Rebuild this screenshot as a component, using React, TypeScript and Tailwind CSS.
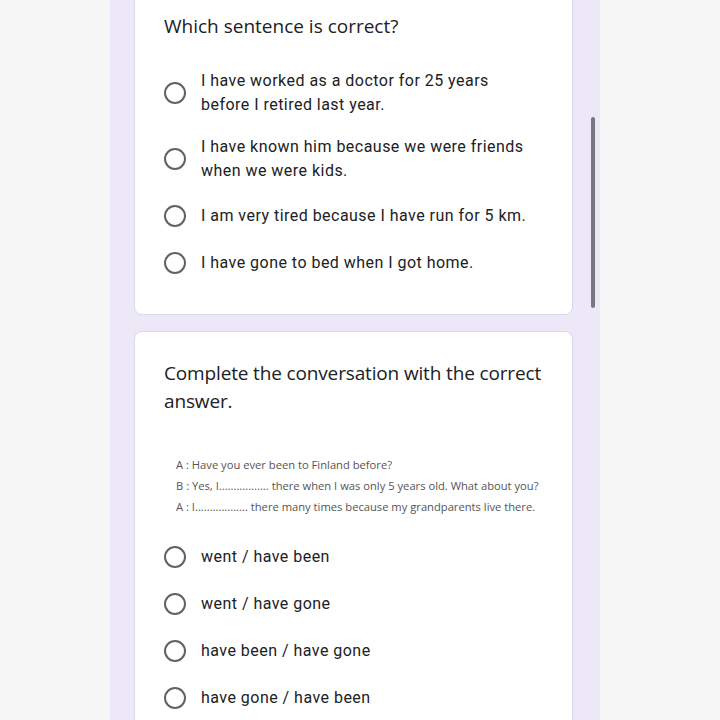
import React from "react";

const Radio = () => (
  <div className="w-[22px] h-[22px] shrink-0 rounded-full border-2 border-[#5f6368]" />
);

const Option = ({ lines, h }: { lines: string[]; h?: string }) => (
  <div className={`flex items-center ${h ?? "min-h-[47px] py-[9px]"}`}>
    <Radio />
    <div className="ml-[15px] text-[16px] leading-[24px] text-[#202124] tracking-[0.47px]">
      {lines.map((l, i) => (
        <div key={i}>{l}</div>
      ))}
    </div>
  </div>
);

export default function App() {
  return (
    <div
      className="relative w-[720px] h-[720px] overflow-hidden flex bg-[#f6f6f7]"
      style={{ fontFamily: "Roboto, 'Liberation Sans', sans-serif" }}
    >
      <div className="w-[110px] shrink-0" />
      <div className="w-[490px] shrink-0 bg-[#ece8f7] pl-[24px] flex flex-col gap-[16px]">
        <div className="w-[439px] mt-[-17px] bg-white rounded-[8px] border border-[#dcd6ec] pt-[28px] pl-[29px] pr-[24px] pb-[28px]">
          <div className="text-[19px] leading-[28px] text-[#202124]" style={{ fontFamily: "'Open Sans', Roboto, sans-serif" }}>
            Which sentence is correct?
          </div>
          <div className="mt-[20px] flex flex-col">
            <Option lines={["I have worked as a doctor for 25 years", "before I retired last year."]} />
            <Option lines={["I have known him because we were friends", "when we were kids."]} />
            <Option lines={["I am very tired because I have run for 5 km."]} />
            <Option lines={["I have gone to bed when I got home."]} />
          </div>
        </div>
        <div className="w-[439px] bg-white rounded-[8px] border border-[#dcd6ec] pt-[27px] pl-[29px] pr-[24px] pb-[29px]">
          <div className="text-[19px] leading-[28px] text-[#202124] tracking-[-0.15px]" style={{ fontFamily: "'Open Sans', Roboto, sans-serif" }}>
            Complete the conversation with the correct
            <br />
            answer.
          </div>
          <div
            className="mt-[39px] pl-[12px] text-[11.2px] leading-[21px] text-[#555555]"
            style={{ fontFamily: "'Open Sans', sans-serif" }}
          >
            <div>A : Have you ever been to Finland before?</div>
            <div>B : Yes, I................. there when I was only 5 years old. What about you?</div>
            <div>A : I.................. there many times because my grandparents live there.</div>
          </div>
          <div className="mt-[16px] flex flex-col">
            <Option h="h-[47px]" lines={["went / have been"]} />
            <Option h="h-[47px]" lines={["went / have gone"]} />
            <Option h="h-[47px]" lines={["have been / have gone"]} />
            <Option h="h-[47px]" lines={["have gone / have been"]} />
          </div>
        </div>
      </div>
      <div className="absolute left-[591px] top-[117px] w-[4px] h-[191px] rounded-full bg-[#77777f]" />
    </div>
  );
}
